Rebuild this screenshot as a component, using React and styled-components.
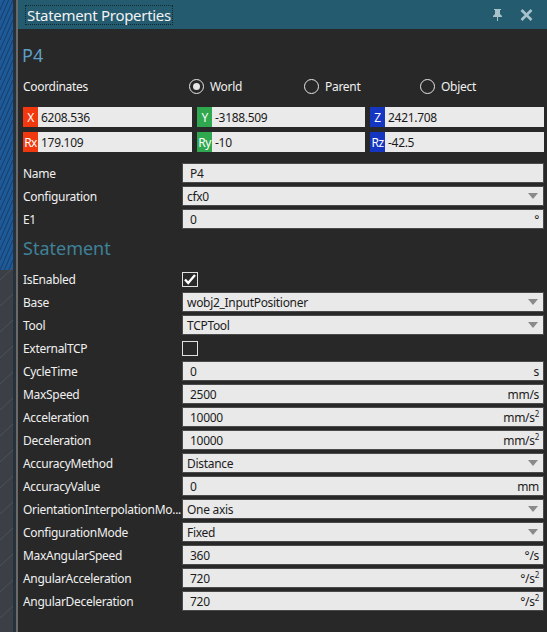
import React from 'react'
import styled, { createGlobalStyle } from 'styled-components'

const GlobalStyle = createGlobalStyle`
  html, body {
    margin: 0;
    padding: 0;
    background: #282828;
  }
  body {
    font-family: 'Noto Sans', 'Open Sans', sans-serif;
    font-size: 12px;
    letter-spacing: -0.3px;
    color: #f0f0f0;
  }
`

const Window = styled.div`
  display: flex;
  width: 547px;
  height: 632px;
  overflow: hidden;
`

const Viewport = styled.div`
  width: 16px;
  flex: none;
  border-right: 2px solid #6a6a6a;
  background: #2a3440;
`

const Panel = styled.div`
  flex: 1;
  display: flex;
  flex-direction: column;
  background: #282828;
  min-width: 0;
`

const TitleBar = styled.div`
  height: 29px;
  flex: none;
  display: flex;
  align-items: center;
  background: #245b6f;
  padding: 0 14px 0 7px;
`

const Title = styled.div`
  font-size: 15px;
  letter-spacing: -0.3px;
  color: #f2f2f2;
  padding: 0 1px;
  line-height: 18px;
  border: 1px dotted #0d2a33;
  margin-top: 1px;
`

const TitleIcons = styled.div`
  margin-left: auto;
  display: flex;
  align-items: center;
  gap: 17px;
`

const Body = styled.div`
  display: flex;
  flex-direction: column;
  padding: 0 3px 0 5px;
`

const Heading = styled.div`
  font-size: 18px;
  line-height: 22px;
  letter-spacing: 0;
  color: ${(p) => p.$color};
  margin: ${(p) => p.$margin};
`

const CoordHeader = styled.div`
  display: grid;
  grid-template-columns: 159px 115px 116px 1fr;
  align-items: center;
  height: 24px;
  margin-bottom: 9px;
`

const Radio = styled.label`
  display: flex;
  align-items: center;
  gap: 6px;
  padding-left: 7px;
`

const RadioDot = styled.span`
  width: 13px;
  height: 13px;
  border-radius: 50%;
  border: 1.5px solid #e6e6e6;
  display: flex;
  align-items: center;
  justify-content: center;
  &::after {
    content: '';
    width: 7px;
    height: 7px;
    border-radius: 50%;
    background: ${(p) => (p.$on ? '#e6e6e6' : 'transparent')};
  }
`

const CoordGrid = styled.div`
  display: grid;
  grid-template-columns: 169px 168px 1fr;
  column-gap: 5px;
  row-gap: 5px;
  margin-bottom: 11px;
`

const CoordField = styled.div`
  display: flex;
  height: 20px;
  background: #eaeaea;
  color: #1a1a1a;
`

const Axis = styled.span`
  width: 15px;
  flex: none;
  background: ${(p) => p.$color};
  color: #ffffff;
  display: flex;
  align-items: center;
  justify-content: center;
  font-size: 12px;
  letter-spacing: -0.6px;
`

const CoordValue = styled.span`
  padding-left: 3px;
  display: flex;
  align-items: center;
`

const Rows = styled.div`
  display: flex;
  flex-direction: column;
  gap: 3px;
`

const Row = styled.div`
  display: grid;
  grid-template-columns: 159px 1fr;
  align-items: center;
  height: 20px;
`

const Label = styled.div`
  white-space: nowrap;
  padding-right: 2px;
`

const Field = styled.div`
  height: 20px;
  box-sizing: border-box;
  border: 1px solid #4a4a4a;
  background: #e9e9e9;
  color: #1c1c1c;
  display: flex;
  align-items: center;
  padding: 0 4px 0 ${(p) => (p.$select ? '4px' : '7px')};
`

const Value = styled.span`
  flex: 1;
`

const Unit = styled.span`
  color: #1c1c1c;
  sup {
    font-size: 8px;
    vertical-align: 5px;
    line-height: 0;
  }
`

const Arrow = styled.span`
  width: 0;
  height: 0;
  border-left: 5px solid transparent;
  border-right: 5px solid transparent;
  border-top: 6px solid #8a8a8a;
  margin-right: 1px;
`

const Check = styled.span`
  width: 16px;
  height: 15px;
  box-sizing: border-box;
  border: 1px solid #e0e0e0;
  display: flex;
  align-items: center;
  justify-content: center;
`

const ViewportArt = () => (
  <svg width="16" height="632" viewBox="0 0 16 632">
    <rect x="0" y="0" width="13" height="270" fill="#1f5a98" />
    {Array.from({ length: 30 }).map((_, i) => (
      <line key={i} x1="0" y1={i * 10 + 10} x2="13" y2={i * 10 - 20} stroke="#173e6a" strokeWidth="1" />
    ))}
    <rect x="0" y="270" width="13" height="362" fill="#3c4046" />
    {Array.from({ length: 14 }).map((_, i) => (
      <line key={i} x1="0" y1={280 + i * 26} x2="13" y2={268 + i * 26} stroke="#4d5259" strokeWidth="1" />
    ))}
    <rect x="13" y="0" width="3" height="632" fill="#26313c" />
  </svg>
)

const PinIcon = () => (
  <svg width="11" height="12" viewBox="0 0 11 12">
    <path d="M2 0h7v1H8v4l2 2v1H6v4H5V8H1V7l2-2V1H2z" fill="#a8c2cb" />
  </svg>
)

const CloseIcon = () => (
  <svg width="13" height="12" viewBox="0 0 13 12">
    <path d="M1.5 1l10 10M11.5 1l-10 10" stroke="#a8c2cb" strokeWidth="2.6" />
  </svg>
)

const CheckMark = () => (
  <svg width="12" height="11" viewBox="0 0 12 11">
    <path d="M1 5.5l3.2 3.5L11 1" stroke="#ffffff" strokeWidth="2.4" fill="none" />
  </svg>
)

const coords = [
  { axis: 'X', color: '#f2380e', value: '6208.536' },
  { axis: 'Y', color: '#2fa84f', value: '-3188.509' },
  { axis: 'Z', color: '#1436c0', value: '2421.708' },
  { axis: 'Rx', color: '#f2380e', value: '179.109' },
  { axis: 'Ry', color: '#2fa84f', value: '-10' },
  { axis: 'Rz', color: '#1436c0', value: '-42.5' },
]

const sq = (base) => (
  <>
    {base}
    <sup>2</sup>
  </>
)

const general = [
  { label: 'Name', value: 'P4' },
  { label: 'Configuration', value: 'cfx0', select: true },
  { label: 'E1', value: '0', unit: '°' },
]

const statement = [
  { label: 'IsEnabled', check: true },
  { label: 'Base', value: 'wobj2_InputPositioner', select: true },
  { label: 'Tool', value: 'TCPTool', select: true },
  { label: 'ExternalTCP', check: false },
  { label: 'CycleTime', value: '0', unit: 's' },
  { label: 'MaxSpeed', value: '2500', unit: 'mm/s' },
  { label: 'Acceleration', value: '10000', unit: sq('mm/s') },
  { label: 'Deceleration', value: '10000', unit: sq('mm/s') },
  { label: 'AccuracyMethod', value: 'Distance', select: true },
  { label: 'AccuracyValue', value: '0', unit: 'mm' },
  { label: 'OrientationInterpolationMo...', value: 'One axis', select: true },
  { label: 'ConfigurationMode', value: 'Fixed', select: true },
  { label: 'MaxAngularSpeed', value: '360', unit: '°/s' },
  { label: 'AngularAcceleration', value: '720', unit: sq('°/s') },
  { label: 'AngularDeceleration', value: '720', unit: sq('°/s') },
]

const PropRow = ({ item }) => (
  <Row>
    <Label>{item.label}</Label>
    {item.check !== undefined ? (
      <Check>{item.check && <CheckMark />}</Check>
    ) : (
      <Field $select={item.select}>
        <Value>{item.value}</Value>
        {item.unit && <Unit>{item.unit}</Unit>}
        {item.select && <Arrow />}
      </Field>
    )}
  </Row>
)

const App = () => {
  return (
    <>
      <GlobalStyle />
      <Window>
        <Viewport>
          <ViewportArt />
        </Viewport>
        <Panel>
          <TitleBar>
            <Title>Statement Properties</Title>
            <TitleIcons>
              <PinIcon />
              <CloseIcon />
            </TitleIcons>
          </TitleBar>
          <Body>
            <Heading $color="#5d9fc4" $margin="15px 0 8px -1px">P4</Heading>
            <CoordHeader>
              <span>Coordinates</span>
              <Radio>
                <RadioDot $on />
                World
              </Radio>
              <Radio>
                <RadioDot />
                Parent
              </Radio>
              <Radio>
                <RadioDot />
                Object
              </Radio>
            </CoordHeader>
            <CoordGrid>
              {coords.map((c) => (
                <CoordField key={c.axis}>
                  <Axis $color={c.color}>{c.axis}</Axis>
                  <CoordValue>{c.value}</CoordValue>
                </CoordField>
              ))}
            </CoordGrid>
            <Rows>
              {general.map((item) => (
                <PropRow key={item.label} item={item} />
              ))}
            </Rows>
            <Heading $color="#3f8199" $margin="8px 0 10px 0">Statement</Heading>
            <Rows>
              {statement.map((item) => (
                <PropRow key={item.label} item={item} />
              ))}
            </Rows>
          </Body>
        </Panel>
      </Window>
    </>
  )
}

export default App
